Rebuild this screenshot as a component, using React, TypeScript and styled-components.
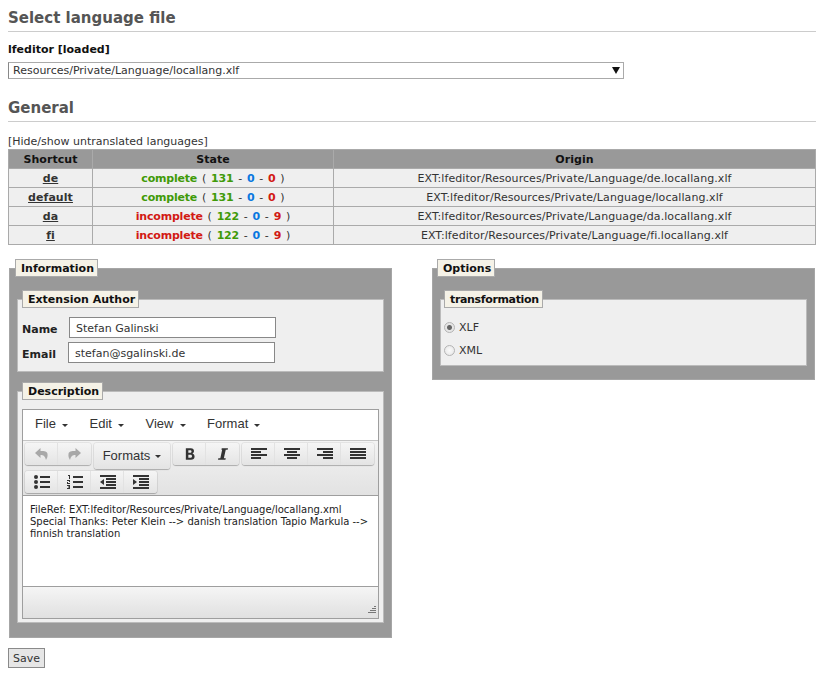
import React from 'react'
import styled, { createGlobalStyle } from 'styled-components'

const GlobalStyle = createGlobalStyle`
  html, body {
    margin: 0;
    padding: 0;
    background: #fff;
  }
  body {
    font-family: 'DejaVu Sans', Verdana, sans-serif;
    font-size: 11px;
    color: #333;
  }
`

const Page = styled.div`
  padding: 8px 8px 0;
  width: 808px;
  height: 668px;
  overflow: hidden;
`

const Heading = styled.h2`
  margin: 0;
  height: 23px;
  font-size: 15px;
  line-height: 21px;
  font-weight: bold;
  color: #555;
  border-bottom: 1px solid #ccc;
`

const FileLabel = styled.div`
  margin-top: 11px;
  height: 19px;
  line-height: 14px;
  font-weight: bold;
  color: #111;
`

const SelectWrap = styled.div`
  position: relative;
  width: 616px;
  height: 17px;
  margin-bottom: 19px;
  &::after {
    content: '';
    position: absolute;
    right: 4px;
    top: 5px;
    border-left: 4px solid transparent;
    border-right: 4px solid transparent;
    border-top: 7px solid #111;
  }
`

const FileSelect = styled.select`
  appearance: none;
  display: block;
  box-sizing: border-box;
  width: 100%;
  height: 17px;
  padding: 0 4px;
  font: 11px 'DejaVu Sans', sans-serif;
  color: #333;
  background: #fff;
  border: 1px solid #aaa;
  border-left-color: #888;
  border-radius: 0;
`

const ToggleLine = styled.div`
  margin-top: 13px;
  height: 14px;
  line-height: 14px;
`

const LangTable = styled.table`
  width: 808px;
  table-layout: fixed;
  border-collapse: collapse;
  font-size: 11px;
  text-align: center;
  letter-spacing: 0.07px;
  th, td {
    border: 1px solid #aaa;
    padding: 0;
  }
  th {
    height: 18px;
    background: #999;
    color: #111;
    font-weight: bold;
  }
  td {
    height: 18px;
    background: #efefef;
  }
`

const StateCell = styled.td`
  word-spacing: 1.2px;
`

const Short = styled.a`
  font-weight: bold;
  color: #333;
  text-decoration: underline;
`

const Stat = styled.b<{ $tone: string }>`
  color: ${p => p.$tone};
  letter-spacing: -0.2px;
`

const Columns = styled.div`
  display: flex;
  gap: 40px;
  margin: 14px 0 0 1px;
  align-items: flex-start;
`

const Outer = styled.fieldset<{ $height: number }>`
  box-sizing: border-box;
  width: 383px;
  height: ${p => p.$height}px;
  margin: 0;
  padding: 13px 7px 0;
  background: #999;
  border: 1px solid #a6a6a6;
  min-width: 0;
`

const Inner = styled.fieldset<{ $height: number }>`
  box-sizing: border-box;
  height: ${p => p.$height}px;
  margin: 0 0 10px;
  padding: 7px 4px 0;
  background: #efefef;
  border: 1px solid #bbb;
  min-width: 0;
`

const Legend = styled.legend<{ $pull?: number }>`
  box-sizing: border-box;
  height: 18px;
  margin-left: ${p => p.$pull ?? 0}px;
  padding: 0 3px 0 5px;
  line-height: 17px;
  font-weight: bold;
  color: #111;
  background: #f5f2e7;
  border: 1px solid #aaa;
`

const NarrowLegend = styled(Legend)`
  letter-spacing: -0.35px;
`

const FormRow = styled.div`
  display: flex;
  align-items: center;
  height: 25px;
`

const FieldLabel = styled.label<{ $width: number }>`
  width: ${p => p.$width}px;
  padding-top: 4px;
  font-weight: bold;
  color: #222;
`

const TextInput = styled.input`
  box-sizing: border-box;
  width: 207px;
  height: 21px;
  padding: 1px 6px 0;
  font: 11px 'DejaVu Sans', sans-serif;
  color: #333;
  background: #fff;
  border: 1px solid #888;
`

const Editor = styled.div`
  box-sizing: border-box;
  height: 210px;
  margin-top: 2px;
  border: 1px solid #9e9e9e;
  background: #fff;
  display: flex;
  flex-direction: column;
`

const MenuBar = styled.div`
  display: flex;
  height: 30px;
  flex: none;
  box-sizing: content-box;
  padding-left: 12px;
  gap: 21.6px;
  align-items: flex-start;
  font: 13px/28px 'Liberation Sans', Arial, sans-serif;
  color: #333;
  border-bottom: 1px solid #c5c5c5;
`

const MenuItem = styled.span`
  display: flex;
  align-items: center;
  gap: 6px;
`

const Caret = styled.i`
  display: inline-block;
  border-left: 3px solid transparent;
  border-right: 3px solid transparent;
  border-top: 3px solid #333;
  margin-top: 2px;
`

const Toolbar = styled.div`
  flex: none;
  box-sizing: border-box;
  height: 55px;
  padding: 2px 2px 0;
  display: flex;
  flex-wrap: wrap;
  align-content: flex-start;
  align-items: flex-start;
  gap: 2px 3px;
  background: linear-gradient(#f3f3f3, #e2e2e2);
  border-bottom: 1px solid #9e9e9e;
`

const Group = styled.div`
  display: flex;
  height: 22px;
  background: linear-gradient(#f5f5f5, #e4e4e4);
  border-radius: 3px;
  box-shadow: 0 0 0 1px rgba(0, 0, 0, 0.06), 0 1px 1px rgba(0, 0, 0, 0.22);
`

const ToolButton = styled.div`
  width: 33px;
  display: flex;
  align-items: center;
  justify-content: center;
  & + & {
    border-left: 1px solid #e2e2e2;
    margin-left: -1px;
  }
`

const FormatsButton = styled.div`
  box-sizing: border-box;
  width: 76px;
  height: 26px;
  padding-bottom: 2px;
  display: flex;
  align-items: center;
  justify-content: center;
  gap: 5px;
  font: 13px 'Liberation Sans', Arial, sans-serif;
  color: #333;
  background: linear-gradient(#f5f5f5, #e4e4e4);
  border-radius: 3px;
  box-shadow: 0 0 0 1px rgba(0, 0, 0, 0.06), 0 1px 1px rgba(0, 0, 0, 0.22);
`

const Content = styled.div`
  flex: 1;
  padding: 8px 7px 0;
  font-size: 10px;
  line-height: 12px;
  color: #222;
`

const StatusBar = styled.div`
  position: relative;
  flex: none;
  height: 31px;
  background: linear-gradient(#f5f5f5, #e0e0e0);
  border-top: 1px solid #9e9e9e;
`

const Grip = styled.svg`
  position: absolute;
  right: 1px;
  bottom: 3px;
`

const RadioGroup = styled.div`
  padding-top: 1px;
`

const RadioRow = styled.label`
  display: flex;
  align-items: center;
  gap: 4px;
  height: 23px;
  margin-left: -1px;
  color: #333;
`

const Radio = styled.input`
  appearance: none;
  box-sizing: border-box;
  width: 11px;
  height: 11px;
  margin: 0;
  border-radius: 50%;
  border: 1px solid #b4b4b4;
  background: radial-gradient(circle, #fafafa, #e4e4e4);
  &:checked {
    background: radial-gradient(circle, #666 0 2px, #e6e6e6 3px);
  }
`

const SaveButton = styled.button`
  display: block;
  box-sizing: border-box;
  width: 37px;
  height: 20px;
  margin-top: 10px;
  padding: 0;
  font: 11px 'DejaVu Sans', sans-serif;
  color: #333;
  background: #e6e6e6;
  border: 1px solid #8a8a8a;
`

const GREEN = '#3f9a08'
const BLUE = '#0a78e0'
const RED = '#d21a14'

const rows = [
  { key: 'de', done: true, a: 131, c: 0, origin: 'EXT:lfeditor/Resources/Private/Language/de.locallang.xlf' },
  { key: 'default', done: true, a: 131, c: 0, origin: 'EXT:lfeditor/Resources/Private/Language/locallang.xlf' },
  { key: 'da', done: false, a: 122, c: 9, origin: 'EXT:lfeditor/Resources/Private/Language/da.locallang.xlf' },
  { key: 'fi', done: false, a: 122, c: 9, origin: 'EXT:lfeditor/Resources/Private/Language/fi.locallang.xlf' },
]

const Lines = ({ bars }: { bars: [number, number][] }) => (
  <svg width="16" height="14" viewBox="0 0 16 14" fill="#333">
    {bars.map(([x, w], i) => (
      <rect key={i} x={x} y={1 + i * 3} width={w} height="2" />
    ))}
  </svg>
)

const UndoIcon = ({ flip }: { flip?: boolean }) => (
  <svg width="13" height="12" viewBox="0 0 13 12" fill="#a8a8a8" style={flip ? { transform: 'scaleX(-1)' } : undefined}>
    <path d="M5.500 0 0 5l5.500 5V7c3 0 4.500 1 5.500 5 .8-1.500 2-3.500 1.500-6C12.500 3.500 9.500 3 5.500 3z" />
  </svg>
)

const BulletIcon = () => (
  <svg width="16" height="14" viewBox="0 0 16 14" fill="#333">
    <circle cx="2" cy="2" r="2" />
    <circle cx="2" cy="7" r="2" />
    <circle cx="2" cy="12" r="2" />
    <rect x="6" y="1" width="10" height="2" />
    <rect x="6" y="6" width="10" height="2" />
    <rect x="6" y="11" width="10" height="2" />
  </svg>
)

const NumberIcon = () => (
  <svg width="16" height="14" viewBox="0 0 16 14" fill="#333">
    <path d="M1 0h2v4H2V1H1zM0 5h3v2H1v1h2v1H0V7h2V6H0zM0 10h3v4H0v-1h2v-.5H1v-1h1V11H0z" />
    <rect x="6" y="1" width="10" height="2" />
    <rect x="6" y="6" width="10" height="2" />
    <rect x="6" y="11" width="10" height="2" />
  </svg>
)

const IndentIcon = ({ out }: { out?: boolean }) => (
  <svg width="16" height="14" viewBox="0 0 16 14" fill="#333">
    <rect x="0" y="0" width="16" height="2" />
    <rect x="6" y="3" width="10" height="2" />
    <rect x="6" y="6" width="10" height="2" />
    <rect x="6" y="9" width="10" height="2" />
    <rect x="0" y="12" width="16" height="2" />
    <path d={out ? 'M4 4v6L0 7z' : 'M0 4v6l4-3z'} />
  </svg>
)

const BoldIcon = () => (
  <svg width="10" height="12" viewBox="0 0 12 14" fill="#333">
    <path fillRule="evenodd" d="M1 0h6c2.500 0 3.800 1.300 3.800 3.400 0 1.500-.8 2.600-2 3.100 1.600.4 2.700 1.700 2.700 3.500 0 2.600-1.700 4-4.300 4H1zM4 2.400v3.200h2.300c1 0 1.500-.6 1.500-1.600s-.5-1.600-1.500-1.600zM4 8v3.600h2.600c1.200 0 1.800-.7 1.800-1.800S7.800 8 6.600 8z" />
  </svg>
)

const ItalicIcon = () => (
  <svg width="10" height="12" viewBox="0 0 12 14" fill="#333">
    <path d="M4.500 0H12l-.4 2H9.300L7 12h2.300l-.4 2H0l.4-2h2.400L5 2H4.100z" />
  </svg>
)

export default function App() {
  return (
    <Page>
      <GlobalStyle />
      <Heading>Select language file</Heading>
      <FileLabel>lfeditor [loaded]</FileLabel>
      <SelectWrap>
        <FileSelect defaultValue="xlf">
          <option value="xlf">Resources/Private/Language/locallang.xlf</option>
        </FileSelect>
      </SelectWrap>
      <Heading>General</Heading>
      <ToggleLine>[Hide/show untranslated languages]</ToggleLine>
      <LangTable>
        <colgroup>
          <col style={{ width: 84 }} />
          <col style={{ width: 241 }} />
          <col />
        </colgroup>
        <thead>
          <tr>
            <th>Shortcut</th>
            <th>State</th>
            <th>Origin</th>
          </tr>
        </thead>
        <tbody>
          {rows.map(r => (
            <tr key={r.key}>
              <td>
                <Short>{r.key}</Short>
              </td>
              <StateCell>
                <Stat $tone={r.done ? GREEN : RED}>{r.done ? 'complete' : 'incomplete'}</Stat> ({' '}
                <Stat $tone={GREEN}>{r.a}</Stat> - <Stat $tone={BLUE}>0</Stat> - <Stat $tone={RED}>{r.c}</Stat> )
              </StateCell>
              <td>{r.origin}</td>
            </tr>
          ))}
        </tbody>
      </LangTable>
      <Columns>
        <Outer $height={379}>
          <Legend $pull={-2}>Information</Legend>
          <Inner $height={82}>
            <Legend>Extension Author</Legend>
            <FormRow>
              <FieldLabel $width={47}>Name</FieldLabel>
              <TextInput defaultValue="Stefan Galinski" />
            </FormRow>
            <FormRow>
              <FieldLabel $width={46}>Email</FieldLabel>
              <TextInput defaultValue="stefan@sgalinski.de" />
            </FormRow>
          </Inner>
          <Inner $height={241}>
            <Legend>Description</Legend>
            <Editor>
              <MenuBar>
                {['File', 'Edit', 'View', 'Format'].map(m => (
                  <MenuItem key={m}>
                    {m} <Caret />
                  </MenuItem>
                ))}
              </MenuBar>
              <Toolbar>
                <Group>
                  <ToolButton><UndoIcon /></ToolButton>
                  <ToolButton><UndoIcon flip /></ToolButton>
                </Group>
                <FormatsButton>
                  Formats <Caret />
                </FormatsButton>
                <Group>
                  <ToolButton><BoldIcon /></ToolButton>
                  <ToolButton><ItalicIcon /></ToolButton>
                </Group>
                <Group>
                  <ToolButton><Lines bars={[[0, 16], [0, 10], [0, 16], [0, 10]]} /></ToolButton>
                  <ToolButton><Lines bars={[[0, 16], [3, 10], [0, 16], [3, 10]]} /></ToolButton>
                  <ToolButton><Lines bars={[[0, 16], [6, 10], [0, 16], [6, 10]]} /></ToolButton>
                  <ToolButton><Lines bars={[[0, 16], [0, 16], [0, 16], [0, 16]]} /></ToolButton>
                </Group>
                <Group>
                  <ToolButton><BulletIcon /></ToolButton>
                  <ToolButton><NumberIcon /></ToolButton>
                  <ToolButton><IndentIcon out /></ToolButton>
                  <ToolButton><IndentIcon /></ToolButton>
                </Group>
              </Toolbar>
              <Content>
                FileRef: EXT:lfeditor/Resources/Private/Language/locallang.xml
                <br />
                Special Thanks: Peter Klein --&gt; danish translation Tapio Markula --&gt; finnish translation
              </Content>
              <StatusBar>
                <Grip width="10" height="10" viewBox="0 0 10 10" fill="#777">
                  <rect x="7" y="1" width="2" height="1" />
                  <rect x="5" y="3" width="4" height="1" />
                  <rect x="3" y="5" width="6" height="1" />
                  <rect x="1" y="7" width="8" height="1" />
                </Grip>
              </StatusBar>
            </Editor>
          </Inner>
        </Outer>
        <Outer $height={121}>
          <Legend $pull={-3}>Options</Legend>
          <Inner $height={76}>
            <NarrowLegend $pull={-1}>transformation</NarrowLegend>
            <RadioGroup>
              <RadioRow>
                <Radio type="radio" name="format" defaultChecked />
                XLF
              </RadioRow>
              <RadioRow>
                <Radio type="radio" name="format" />
                XML
              </RadioRow>
            </RadioGroup>
          </Inner>
        </Outer>
      </Columns>
      <SaveButton type="button">Save</SaveButton>
    </Page>
  )
}
